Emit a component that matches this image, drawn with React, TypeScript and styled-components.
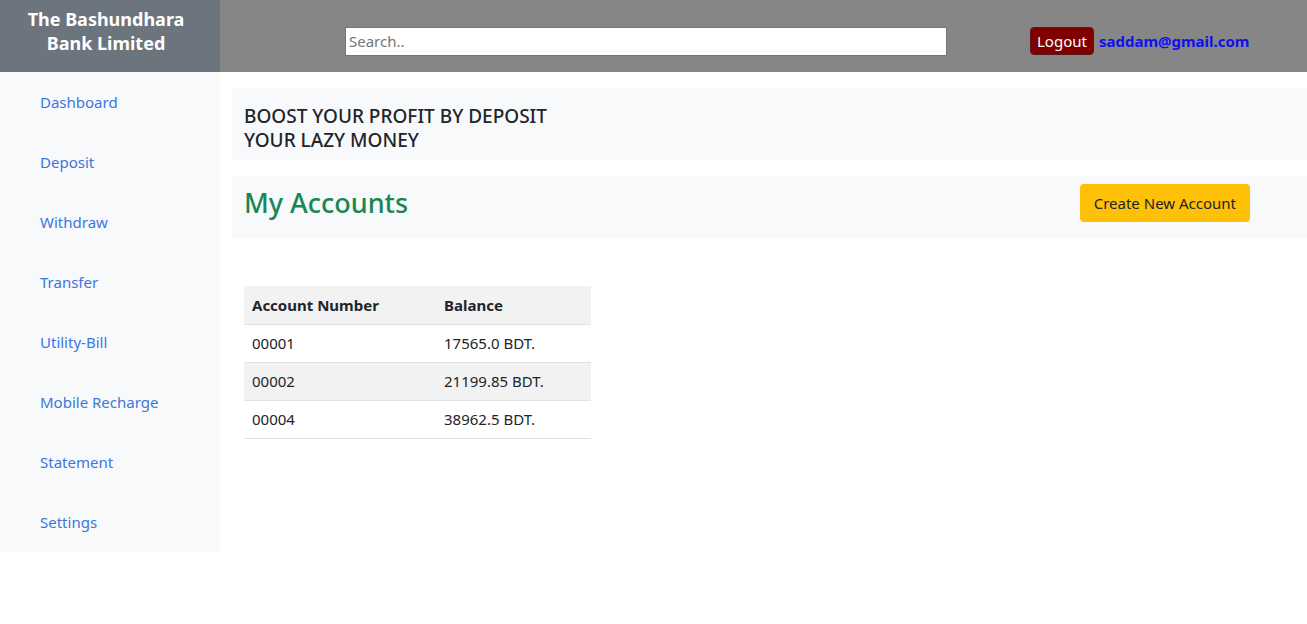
import styled, { createGlobalStyle } from "styled-components";

const GlobalStyle = createGlobalStyle`
  body {
    margin: 0;
    font-family: "Noto Sans", "Open Sans", sans-serif;
    background: #fff;
    color: #212529;
  }
  * {
    box-sizing: border-box;
  }
`;

const links = [
  "Dashboard",
  "Deposit",
  "Withdraw",
  "Transfer",
  "Utility-Bill",
  "Mobile Recharge",
  "Statement",
  "Settings",
];

const accounts = [
  { number: "00001", balance: "17565.0 BDT." },
  { number: "00002", balance: "21199.85 BDT." },
  { number: "00004", balance: "38962.5 BDT." },
];

function App() {
  return (
    <>
      <GlobalStyle />
      <TopBar>
        <Brand>
          The Bashundhara
          <br />
          Bank Limited
        </Brand>
        <TopRest>
          <Search placeholder="Search.." />
          <UserBox>
            <LogoutButton>Logout</LogoutButton>
            <Email href="#">saddam@gmail.com</Email>
          </UserBox>
        </TopRest>
      </TopBar>
      <Body>
        <Sidebar>
          {links.map((l) => (
            <NavLink key={l} href="#">
              {l}
            </NavLink>
          ))}
        </Sidebar>
        <Main>
          <Banner>
            <BannerText>BOOST YOUR PROFIT BY DEPOSIT YOUR LAZY MONEY</BannerText>
          </Banner>
          <AccountsBar>
            <Heading>My Accounts</Heading>
            <CreateButton>Create New Account</CreateButton>
          </AccountsBar>
          <Table>
            <thead>
              <tr>
                <Th>Account Number</Th>
                <Th>Balance</Th>
              </tr>
            </thead>
            <tbody>
              {accounts.map((a, idx) => (
                <Row key={a.number} striped={idx % 2 === 1}>
                  <Td>{a.number}</Td>
                  <Td>{a.balance}</Td>
                </Row>
              ))}
            </tbody>
          </Table>
        </Main>
      </Body>
    </>
  );
}

const TopBar = styled.div`
  height: 72px;
  display: flex;
`;

const Brand = styled.div`
  width: 220px;
  background: #6c757d;
  color: #fff;
  font-weight: 700;
  font-size: 18px;
  line-height: 24px;
  text-align: center;
  padding: 7px 8px 0 0;
`;

const TopRest = styled.div`
  flex: 1;
  background: #868686;
  display: flex;
  align-items: center;
  padding: 10px 0 0 125px;
`;

const Search = styled.input`
  width: 602px;
  height: 29px;
  border: 1px solid #767676;
  padding: 1px 3px;
  font-family: "Noto Sans", sans-serif;
  font-size: 15px;
  outline: none;
  &::placeholder {
    color: #757575;
  }
`;

const UserBox = styled.div`
  display: flex;
  align-items: center;
  margin-left: 83px;
  gap: 5px;
`;

const LogoutButton = styled.button`
  height: 28px;
  padding: 0 6px;
  background: #800000;
  color: #fff;
  border: 1px solid #5a1a1a;
  border-radius: 4px;
  font-family: "Noto Sans", sans-serif;
  font-size: 15px;
`;

const Email = styled.a`
  color: #1010ee;
  font-weight: 700;
  font-size: 15px;
  text-decoration: none;
`;

const Body = styled.div`
  display: flex;
  align-items: flex-start;
`;

const Sidebar = styled.nav`
  width: 220px;
  background: #f8f9fa;
  display: flex;
  flex-direction: column;
  padding: 0 0 0 40px;
  height: 480px;
`;

const NavLink = styled.a`
  height: 60px;
  display: flex;
  align-items: center;
  color: #3b76df;
  font-size: 15px;
  text-decoration: none;
`;

const Main = styled.main`
  flex: 1;
  padding: 16px 0 0 12px;
`;

const Banner = styled.div`
  background: #f8f9fa;
  height: 72px;
  padding: 16px 12px 0;
`;

const BannerText = styled.h5`
  margin: 0;
  width: 330px;
  font-size: 19px;
  font-weight: 500;
  line-height: 24px;
  color: #212529;
`;

const AccountsBar = styled.div`
  margin-top: 16px;
  height: 62px;
  background: #f8f9fa;
  display: flex;
  align-items: flex-start;
  justify-content: space-between;
  padding: 8px 57px 0 12px;
`;

const Heading = styled.h2`
  margin: 2px 0 0;
  font-size: 27px;
  line-height: 34px;
  font-weight: 500;
  color: #198754;
`;

const CreateButton = styled.button`
  height: 38px;
  padding: 0 14px;
  background: #ffc107;
  border: none;
  border-radius: 4px;
  font-family: "Noto Sans", sans-serif;
  font-size: 15px;
  color: #212529;
`;

const Table = styled.table`
  margin: 48px 0 0 12px;
  width: 347px;
  border-collapse: collapse;
  font-size: 15px;
`;

const Th = styled.th`
  text-align: left;
  font-weight: 700;
  height: 38px;
  padding: 0 8px;
  background: #f2f2f2;
  border-bottom: 1px solid #dee2e6;
  &:first-child {
    width: 192px;
  }
`;

const Row = styled.tr<{ striped: boolean }>`
  background: ${(p) => (p.striped ? "#f2f2f2" : "#fff")};
`;

const Td = styled.td`
  height: 38px;
  padding: 0 8px;
  border-bottom: 1px solid #dee2e6;
`;

export default App;
